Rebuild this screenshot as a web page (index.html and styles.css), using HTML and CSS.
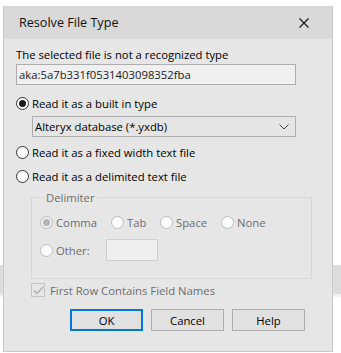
FILE: index.html
```html
<!DOCTYPE html>
<html lang="en">
  <head>
    <meta charset="UTF-8" />
    <title>Resolve File Type</title>
    <link rel="stylesheet" href="styles.css">
  </head>
  <body>
    <div class="dialog">
      <header class="titlebar">
        <span class="title">Resolve File Type</span>
        <svg class="close" width="10" height="10" viewBox="0 0 10 10">
          <path d="M0.5 0.5 L9.5 9.5 M9.5 0.5 L0.5 9.5" stroke="#1a1a1a" stroke-width="1.2" fill="none" />
        </svg>
      </header>
      <main class="content">
        <p class="msg">The selected file is not a recognized type</p>
        <div class="field">aka:5a7b331f0531403098352fba</div>

        <label class="opt first"><span class="radio on"></span>Read it as a built in type</label>
        <div class="select">
          <span>Alteryx database (*.yxdb)</span>
          <svg width="10" height="6" viewBox="0 0 10 6">
            <path d="M0.5 0.5 L5 5 L9.5 0.5" stroke="#444" stroke-width="1" fill="none" />
          </svg>
        </div>
        <label class="opt"><span class="radio"></span>Read it as a fixed width text file</label>
        <label class="opt"><span class="radio"></span>Read it as a delimited text file</label>

        <fieldset class="delim">
          <legend>Delimiter</legend>
          <div class="row">
            <label class="dopt comma"><span class="radio off on"></span>Comma</label>
            <label class="dopt tab"><span class="radio off"></span>Tab</label>
            <label class="dopt space"><span class="radio off"></span>Space</label>
            <label class="dopt"><span class="radio off"></span>None</label>
          </div>
          <div class="row other">
            <label class="dopt"><span class="radio off"></span>Other:</label>
            <span class="otherbox"></span>
          </div>
        </fieldset>

        <label class="check">
          <span class="box">
            <svg width="11" height="9" viewBox="0 0 11 9">
              <path d="M0.8 4.5 L3.8 7.5 L10.2 1" stroke="#a8a8a8" stroke-width="1.2" fill="none" />
            </svg>
          </span>
          First Row Contains Field Names
        </label>

        <div class="buttons">
          <button class="btn default">OK</button>
          <button class="btn">Cancel</button>
          <button class="btn">Help</button>
        </div>
      </main>
    </div>
  </body>
</html>
```

FILE: styles.css
```css
body {
  margin: 0;
  padding: 0;
  height: 353px;
  overflow: hidden;
  background: linear-gradient(
    180deg,
    #ffffff 0,
    #ffffff 265px,
    #dcdcdc 265px,
    #dcdcdc 294px,
    #f2f2f2 294px,
    #f2f2f2 297px,
    #ffffff 297px
  );
  font-family: "Open Sans", "Noto Sans", sans-serif;
  font-size: 11.3px;
  color: #000;
}

.dialog {
  margin-left: 3px;
  margin-top: 6px;
  width: 328px;
  height: 345px;
  background: #e6e6e6;
  border: 1px solid #c9c9c9;
  border-top: none;
  display: flex;
  flex-direction: column;
}

.titlebar {
  height: 33px;
  background: #d9d9d9;
  display: flex;
  align-items: center;
  justify-content: space-between;
  padding-left: 15px;
  padding-right: 23px;
}

.title {
  font-size: 12.6px;
  color: #111;
}

.content {
  padding-left: 12px;
  padding-top: 8px;
  display: flex;
  flex-direction: column;
  align-items: flex-start;
}

.msg {
  margin: 0;
  line-height: 16px;
}

.field {
  margin-top: 1px;
  width: 276px;
  height: 19px;
  line-height: 19px;
  border: 1px solid #adadad;
  background: #f0f0f0;
  padding-left: 2px;
  box-sizing: content-box;
  color: #1a1a1a;
}

.opt {
  display: flex;
  align-items: center;
  height: 24px;
  gap: 3px;
}

.opt.first {
  margin-top: 6px;
}

.radio {
  width: 11px;
  height: 11px;
  border: 1px solid #333;
  border-radius: 50%;
  background: #fff;
  display: flex;
  align-items: center;
  justify-content: center;
  flex-shrink: 0;
}

.radio.on::after {
  content: "";
  width: 7px;
  height: 7px;
  border-radius: 50%;
  background: #1a1a1a;
}

.radio.off {
  border-color: #bcbcbc;
  background: #fbfbfb;
}

.radio.off.on {
  background: #f0f0f0;
}

.radio.off.on::after {
  background: #b4b4b4;
}

.select {
  margin-left: 16px;
  margin-top: 1px;
  margin-bottom: 3px;
  width: 254px;
  height: 19px;
  padding: 0 6px 0 2px;
  border: 1px solid #adadad;
  background: #e5e5e5;
  display: flex;
  align-items: center;
  justify-content: space-between;
}

.delim {
  margin: 2px 0 0 15px;
  width: 281px;
  height: 89px;
  box-sizing: border-box;
  border: 1px solid #d7d7d7;
  padding: 6px 0 0 8px;
  color: #6d6d6d;
}

.delim legend {
  padding: 0 2px;
  margin-left: 4px;
  color: #6d6d6d;
}

.row {
  display: flex;
  align-items: center;
  height: 22px;
}

.row.other {
  margin-top: 6px;
}

.dopt {
  display: flex;
  align-items: center;
  gap: 3px;
}

.comma {
  width: 71px;
}

.tab {
  width: 49px;
}

.space {
  width: 61px;
}

.otherbox {
  margin-left: 16px;
  width: 50px;
  height: 20px;
  border: 1px solid #cfcfcf;
  background: #efefef;
}

.check {
  margin: 3px 0 0 15px;
  display: flex;
  align-items: center;
  gap: 5px;
  color: #6d6d6d;
  height: 16px;
}

.box {
  width: 12px;
  height: 12px;
  border: 1px solid #c4c4c4;
  display: flex;
  align-items: center;
  justify-content: center;
}

.buttons {
  margin-top: 11px;
  margin-left: 54px;
  display: flex;
  gap: 8px;
}

.btn {
  width: 73px;
  height: 22px;
  margin: 0;
  padding: 0;
  background: #e1e1e1;
  border: 1px solid #adadad;
  font-family: "Open Sans", "Noto Sans", sans-serif;
  font-size: 11.3px;
  color: #000;
}

.btn.default {
  border: 2px solid #0078d7;
}
```
